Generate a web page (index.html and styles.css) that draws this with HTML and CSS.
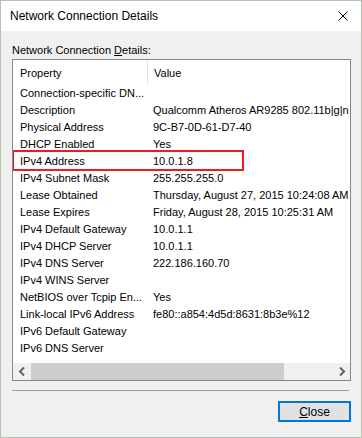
FILE: index.html
```html
<!DOCTYPE html>
<html>
<head>
    <title>Network Connection Details</title>
    <link rel="stylesheet" href="styles.css">
</head>
<body>
    <!-- Dialog window -->
    <div class="window">
        <div class="titlebar">
            <span class="title">Network Connection Details</span>
            <svg class="close-x" width="10" height="10" viewBox="0 0 10 10">
                <path d="M0.5 0.5 L9.5 9.5 M9.5 0.5 L0.5 9.5" stroke="#000" stroke-width="1" fill="none"/>
            </svg>
        </div>

        <div class="dialog-body">
            <div class="label">Network Connection <u>D</u>etails:</div>

            <!-- List view -->
            <div class="list">
                <div class="list-header">
                    <div class="col-prop">Property</div>
                    <div class="col-val">Value</div>
                </div>
                <div class="list-rows">
                    <div class="row"><div class="col-prop">Connection-specific DN...</div><div class="col-val"></div></div>
                    <div class="row"><div class="col-prop">Description</div><div class="col-val">Qualcomm Atheros AR9285 802.11b|g|n WiFi Adapter</div></div>
                    <div class="row"><div class="col-prop">Physical Address</div><div class="col-val">9C-B7-0D-61-D7-40</div></div>
                    <div class="row"><div class="col-prop">DHCP Enabled</div><div class="col-val">Yes</div></div>
                    <div class="row marked"><div class="col-prop">IPv4 Address</div><div class="col-val">10.0.1.8</div></div>
                    <div class="row"><div class="col-prop">IPv4 Subnet Mask</div><div class="col-val">255.255.255.0</div></div>
                    <div class="row"><div class="col-prop">Lease Obtained</div><div class="col-val">Thursday, August 27, 2015 10:24:08 AM</div></div>
                    <div class="row"><div class="col-prop">Lease Expires</div><div class="col-val">Friday, August 28, 2015 10:25:31 AM</div></div>
                    <div class="row"><div class="col-prop">IPv4 Default Gateway</div><div class="col-val">10.0.1.1</div></div>
                    <div class="row"><div class="col-prop">IPv4 DHCP Server</div><div class="col-val">10.0.1.1</div></div>
                    <div class="row"><div class="col-prop">IPv4 DNS Server</div><div class="col-val">222.186.160.70</div></div>
                    <div class="row"><div class="col-prop">IPv4 WINS Server</div><div class="col-val"></div></div>
                    <div class="row"><div class="col-prop">NetBIOS over Tcpip En...</div><div class="col-val">Yes</div></div>
                    <div class="row"><div class="col-prop">Link-local IPv6 Address</div><div class="col-val">fe80::a854:4d5d:8631:8b3e%12</div></div>
                    <div class="row"><div class="col-prop">IPv6 Default Gateway</div><div class="col-val"></div></div>
                    <div class="row"><div class="col-prop">IPv6 DNS Server</div><div class="col-val"></div></div>
                </div>
                <!-- Horizontal scrollbar -->
                <div class="hscroll">
                    <div class="arrow">
                        <svg width="8" height="9" viewBox="0 0 8 9"><path d="M6 0.5 L2 4.5 L6 8.5" stroke="#606060" stroke-width="2" fill="none"/></svg>
                    </div>
                    <div class="track"><div class="thumb"></div></div>
                    <div class="arrow">
                        <svg width="8" height="9" viewBox="0 0 8 9"><path d="M2 0.5 L6 4.5 L2 8.5" stroke="#606060" stroke-width="2" fill="none"/></svg>
                    </div>
                </div>
            </div>

            <div class="separator"></div>

            <div class="actions">
                <button class="btn-close"><u>C</u>lose</button>
            </div>
        </div>
    </div>
</body>
</html>
```

FILE: styles.css
```css
/* Page reset */
body {
    margin: 0;
    background-color: #f0f0f0;
    font-family: 'Liberation Sans', Arial, sans-serif;
    font-size: 11px;
    color: #000000;
}

/* Outer window frame */
.window {
    width: 362px;
    height: 438px;
    box-sizing: border-box;
    border: 1px solid #b7c2ad;
    background-color: #f0f0f0;
    display: flex;
    flex-direction: column;
}

.titlebar {
    height: 30px;
    background-color: #ffffff;
    display: flex;
    align-items: center;
    justify-content: space-between;
    padding: 0 9px 0 9px;
}

.title {
    font-family: 'Liberation Sans', Arial, sans-serif;
    font-size: 12px;
    color: #000000;
}

.close-x {
    margin-right: 4px;
}

.dialog-body {
    flex: 1;
    padding: 12px 10px 0 11px;
    display: flex;
    flex-direction: column;
}

.label {
    height: 14px;
    line-height: 14px;
    margin-bottom: 2px;
}

/* List view */
.list {
    height: 322px;
    box-sizing: border-box;
    border: 1px solid #828790;
    background-color: #ffffff;
    display: flex;
    flex-direction: column;
    overflow: hidden;
}

.list-header {
    height: 25px;
    display: flex;
    align-items: center;
    flex-shrink: 0;
}

.list-header .col-prop {
    border-right: 1px solid #e5e5e5;
    height: 25px;
    line-height: 26px;
}

.list-rows {
    flex: 1;
}

.row {
    height: 17px;
    line-height: 17px;
    display: flex;
    white-space: nowrap;
    position: relative;
}

.col-prop {
    width: 127px;
    padding-left: 7px;
    flex-shrink: 0;
    overflow: hidden;
}

.col-val {
    padding-left: 6px;
    white-space: nowrap;
}

/* Red annotation box round the IPv4 row */
.row.marked::after {
    content: "";
    position: absolute;
    left: -1px;
    top: -3px;
    width: 232px;
    height: 21px;
    box-sizing: border-box;
    border: 2px solid #ed1c24;
}

/* Horizontal scrollbar */
.hscroll {
    height: 17px;
    display: flex;
    background-color: #f0f0f0;
    flex-shrink: 0;
}

.arrow {
    width: 17px;
    display: flex;
    align-items: center;
    justify-content: center;
}

.track {
    flex: 1;
    display: flex;
    align-items: stretch;
}

.thumb {
    width: 253px;
    background-color: #cdcdcd;
    margin-left: 1px;
}

.separator {
    height: 1px;
    background-color: #a0a0a0;
    margin: 9px 2px 0 0;
}

.actions {
    display: flex;
    justify-content: flex-end;
    margin-top: 10px;
}

.btn-close {
    width: 73px;
    height: 21px;
    box-sizing: border-box;
    border: 2px solid #0078d7;
    background-color: #e1e1e1;
    font-family: 'Liberation Sans', Arial, sans-serif;
    font-size: 12px;
    color: #000000;
    padding: 0;
}
```
